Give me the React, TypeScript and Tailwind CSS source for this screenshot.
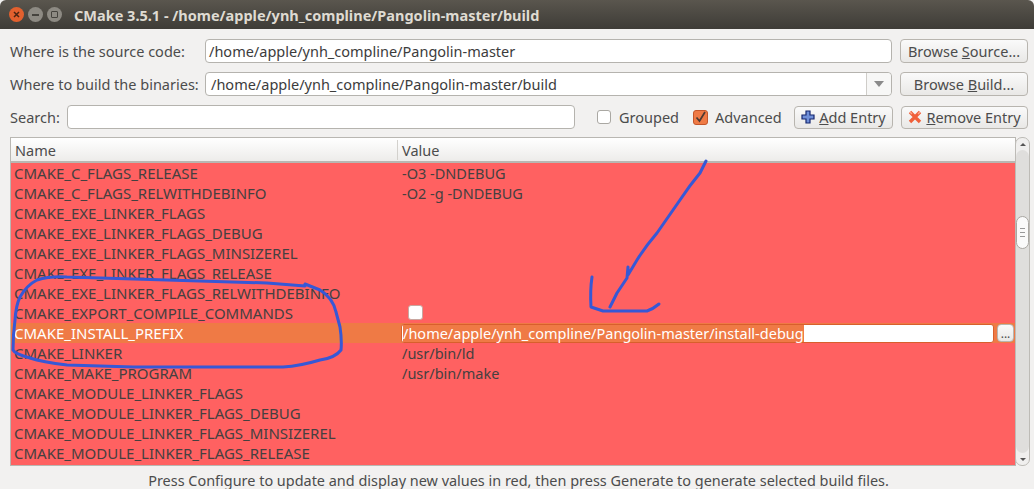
const rows: [string, string][] = [
  ["CMAKE_C_FLAGS_RELEASE", "-O3 -DNDEBUG"],
  ["CMAKE_C_FLAGS_RELWITHDEBINFO", "-O2 -g -DNDEBUG"],
  ["CMAKE_EXE_LINKER_FLAGS", ""],
  ["CMAKE_EXE_LINKER_FLAGS_DEBUG", ""],
  ["CMAKE_EXE_LINKER_FLAGS_MINSIZEREL", ""],
  ["CMAKE_EXE_LINKER_FLAGS_RELEASE", ""],
  ["CMAKE_EXE_LINKER_FLAGS_RELWITHDEBINFO", ""],
  ["CMAKE_EXPORT_COMPILE_COMMANDS", "#check"],
  ["CMAKE_INSTALL_PREFIX", "#edit"],
  ["CMAKE_LINKER", "/usr/bin/ld"],
  ["CMAKE_MAKE_PROGRAM", "/usr/bin/make"],
  ["CMAKE_MODULE_LINKER_FLAGS", ""],
  ["CMAKE_MODULE_LINKER_FLAGS_DEBUG", ""],
  ["CMAKE_MODULE_LINKER_FLAGS_MINSIZEREL", ""],
  ["CMAKE_MODULE_LINKER_FLAGS_RELEASE", ""],
];

const btn =
  "flex shrink-0 items-center justify-center rounded-[4px] border border-[#b8b5af] bg-gradient-to-b from-[#fafafa] to-[#e9e8e6] text-[#4c4c4c]";
const field = "flex shrink-0 items-center rounded-[4px] border border-[#b5b3ae] bg-white";

const Row = ({ name, value }: { name: string; value: string }) => {
  const active = value === "#edit";
  return (
    <div className={`flex h-5 shrink-0 items-center ${active ? "bg-[#ef7a45] text-white" : "text-[#454040]"}`}>
      <div className="w-[387px] shrink-0 pl-[3px] text-[15px] whitespace-nowrap">{name}</div>
      {value === "#check" && <div className="mb-[1px] ml-[10px] size-[15px] rounded-[3px] border border-[#c9a7a0] bg-white" />}
      {active && (
        <div className="flex flex-1 items-center">
          <div className="ml-[3px] flex h-[19px] w-[593px] items-center rounded-[3px] border border-[#d85f2c] bg-white pl-[1px]">
            <span className="w-[401px] bg-[#ef7a45] leading-[17px] whitespace-nowrap text-white">
              /home/apple/ynh_compline/Pangolin-master/install-debug
            </span>
          </div>
          <div className={`${btn} ml-[3px] h-[18px] w-[17px] items-end pb-[1px] text-[12px] leading-none`}>...</div>
        </div>
      )}
      {!active && value !== "#check" && <div className="pl-[4px]">{value}</div>}
    </div>
  );
};

export default function App() {
  return (
    <div className="relative flex h-[489px] w-[1034px] flex-col overflow-hidden bg-[#f2f1f0] font-['Noto_Sans','Open_Sans',sans-serif] text-[14.5px] leading-[20px] text-[#4c4c4c]">
      {/* Title bar */}
      <div className="flex h-[29px] shrink-0 items-center rounded-t-[6px] bg-gradient-to-b from-[#5a564e] to-[#3e3c37] pl-[9px]">
        <div className="flex size-[15px] items-center justify-center rounded-full bg-[#e2602e]">
          <svg width="7" height="7" viewBox="0 0 7 7">
            <path d="M1 1l5 5M6 1l-5 5" stroke="#4a2412" strokeWidth="1.5" />
          </svg>
        </div>
        <div className="ml-[4px] flex size-[15px] items-center justify-center rounded-full bg-[#8d8a83]">
          <div className="h-[2px] w-[7px] bg-[#45433e]" />
        </div>
        <div className="ml-[4px] flex size-[15px] items-center justify-center rounded-full bg-[#8d8a83]">
          <div className="size-[7px] rounded-[1px] border border-[#45433e]" />
        </div>
        <div className="ml-[12px] text-[14.5px] font-bold whitespace-nowrap text-[#dfdbd2]">
          CMake 3.5.1 - /home/apple/ynh_compline/Pangolin-master/build
        </div>
      </div>

      {/* Source and build paths */}
      <div className="mt-[10px] flex h-[24px] shrink-0 items-center pr-[4px] pl-[10px]">
        <div className="w-[195px] shrink-0 whitespace-nowrap">Where is the source code:</div>
        <div className={`${field} h-full w-[687px] pl-[3px] text-[#3c3c3c]`}>/home/apple/ynh_compline/Pangolin-master</div>
        <div className={`${btn} ml-[8px] h-full w-[128px]`}>
          <span>
            Browse <span className="underline">S</span>ource...
          </span>
        </div>
      </div>
      <div className="mt-[9px] flex h-[24px] shrink-0 items-center pr-[4px] pl-[10px]">
        <div className="w-[195px] shrink-0 whitespace-nowrap">Where to build the binaries:</div>
        <div className={`${field} h-full w-[687px] text-[#3c3c3c]`}>
          <div className="flex-1 pl-[5px]">/home/apple/ynh_compline/Pangolin-master/build</div>
          <div className="flex h-full w-[25px] items-center justify-center rounded-r-[4px] border-l border-[#cfcdc9] bg-[#f7f7f6]">
            <div className="size-0 border-x-[5px] border-t-[6px] border-x-transparent border-t-[#8a8a8a]" />
          </div>
        </div>
        <div className={`${btn} ml-[8px] h-full w-[128px]`}>
          <span>
            Browse <span className="underline">B</span>uild...
          </span>
        </div>
      </div>

      {/* Search and options */}
      <div className="mt-[9px] flex h-[24px] shrink-0 items-center pr-[4px] pl-[10px]">
        <div className="w-[57px] shrink-0">Search:</div>
        <div className={`${field} h-full w-[508px]`} />
        <div className="ml-[22px] size-[14px] shrink-0 rounded-[3px] border border-[#aaa8a3] bg-white" />
        <div className="ml-[8px] w-[63px] shrink-0">Grouped</div>
        <div className="ml-[11px] flex size-[15px] shrink-0 items-center justify-center rounded-[3px] border border-[#c4562a] bg-[#ef7a45]">
          <svg width="13" height="13" viewBox="0 0 13 13" fill="none">
            <path d="M2.5 6.5l3 3.5 5.5-9" stroke="#4d3a33" strokeWidth="1.7" />
          </svg>
        </div>
        <div className="ml-[7px] w-[72px] shrink-0 whitespace-nowrap">Advanced</div>
        <div className={`${btn} ml-[7px] h-[23px] w-[99px] gap-[4px] border-[#aeaca7] whitespace-nowrap`}>
          <svg width="14" height="14" viewBox="0 0 14 14">
            <path d="M5 1h4v4h4v4H9v4H5V9H1V5h4z" fill="#6f8fd8" stroke="#14266e" strokeWidth="1.2" />
          </svg>
          <span>
            <span className="underline">A</span>dd Entry
          </span>
        </div>
        <div className={`${btn} ml-[8px] h-[23px] w-[127px] gap-[4px] border-[#aeaca7] whitespace-nowrap`}>
          <svg width="14" height="14" viewBox="0 0 14 14">
            <path d="M2 2l10 10M12 2L2 12" stroke="#f0603a" strokeWidth="3.4" />
            <path d="M2 2l2 2M12 2l-2 2" stroke="#f9a58b" strokeWidth="1.4" />
          </svg>
          <span>
            <span className="underline">R</span>emove Entry
          </span>
        </div>
      </div>

      {/* Cache table */}
      <div className="mt-[8px] flex h-[329px] shrink-0 pr-[4px] pl-[10px]">
        <div className="flex w-[1006px] flex-col overflow-hidden border border-[#b9b7b2]">
          <div className="flex h-[25px] shrink-0 items-center border-b-2 border-[#b9b7b2] bg-gradient-to-b from-white to-[#edecea] text-[#4c4c4c]">
            <div className="w-[387px] border-r border-[#d3d1cd] pl-[4px]">Name</div>
            <div className="pl-[4px]">Value</div>
          </div>
          <div className="flex flex-1 flex-col bg-[#ff6161]">
            {rows.map(([name, value]) => (
              <Row key={name} name={name} value={value} />
            ))}
          </div>
        </div>
        <div className="ml-[-1px] flex w-[15px] flex-col rounded-[7px] border border-[#bdbbb6] bg-[#f0efee]">
          <div className="flex h-[12px] shrink-0 items-center justify-center">
            <div className="size-0 border-x-[3px] border-b-[3px] border-x-transparent border-b-[#555]" />
          </div>
          <div className="flex flex-1 flex-col rounded-[7px] bg-[#dfdedc]">
            <div className="h-[66px]" />
            <div className="flex h-[33px] flex-col items-center justify-center gap-[3px] rounded-[7px] border border-[#a9a7a2] bg-[#fafafa]">
              <div className="h-px w-[5px] bg-[#999]" />
              <div className="h-px w-[5px] bg-[#999]" />
              <div className="h-px w-[5px] bg-[#999]" />
            </div>
          </div>
          <div className="flex h-[12px] shrink-0 items-center justify-center">
            <div className="size-0 border-x-[3px] border-t-[3px] border-x-transparent border-t-[#555]" />
          </div>
        </div>
      </div>

      <div className="mt-[6px] h-[17px] pl-[3px] text-center text-[14.45px] leading-[17px] whitespace-nowrap">
        Press Configure to update and display new values in red, then press Generate to generate selected build files.
      </div>

      {/* Hand-drawn annotations */}
      <svg className="absolute top-0 left-0" width="1034" height="489" fill="none" stroke="#3658d6" strokeWidth="3" strokeLinecap="round" strokeLinejoin="round">
        <path d="M305 284 L320 290 Q333 298 336 312 L340 327 Q342 340 341 350 Q335 358 320 360 Q300 366 283 367 L133 367 L67 365 Q42 362 30 358 Q15 354 13 350 Q13 335 15 320 Q16 305 20 297 Q27 285 37 280 Q50 276 67 277 L167 280 L267 283 L305 286" />
        <path d="M706 161 L700 173 Q690 185 680 200 L657 233 Q645 247 637 260 L628 275 L628 267 L627 278 L617 293 L610 307" />
        <path d="M592 277 Q590 290 591 307 L603 311 L647 311 Q653 309 659 304" />
      </svg>
    </div>
  );
}
